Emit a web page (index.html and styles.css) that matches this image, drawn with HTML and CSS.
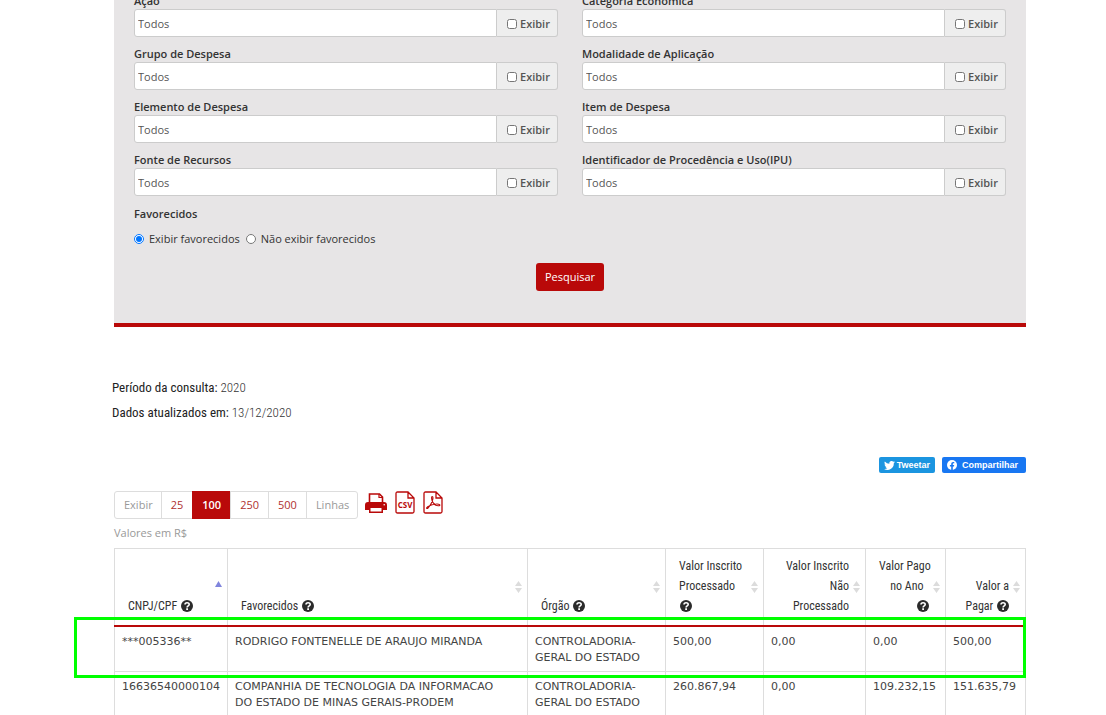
FILE: index.html
```html
<!DOCTYPE html>
<html lang="pt-BR">
<head>
<meta charset="utf-8">
<title>Consulta de Despesas</title>
<link rel="stylesheet" href="styles.css">
</head>
<body>
<svg class="sprite" aria-hidden="true">
  <symbol id="help" viewBox="0 0 12 12"><circle cx="6" cy="6" r="6" fill="#2b2b2b"/><path d="M4 4.6C4 2.2 8.2 2.2 8.2 4.5 8.2 5.9 6.1 5.8 6.1 7.4" fill="none" stroke="#fff" stroke-width="1.6"/><path d="M5.2 8.2h1.8v1.7H5.2z" fill="#fff"/></symbol>
  <symbol id="sort" viewBox="0 0 7 12"><path d="M3.500 0 7 5H0zM0 7h7l-3.500 5z" fill="#dcdcdc"/></symbol>
</svg>
<main class="page">
  <form class="panel">
    <div class="fields">
      <div class="field"><label for="f1">Ação</label><div class="group"><input type="text" id="f1" value="Todos"><label class="addon"><input type="checkbox">Exibir</label></div></div>
      <div class="field"><label for="f2">Categoria Econômica</label><div class="group"><input type="text" id="f2" value="Todos"><label class="addon"><input type="checkbox">Exibir</label></div></div>
      <div class="field"><label for="f3">Grupo de Despesa</label><div class="group"><input type="text" id="f3" value="Todos"><label class="addon"><input type="checkbox">Exibir</label></div></div>
      <div class="field"><label for="f4">Modalidade de Aplicação</label><div class="group"><input type="text" id="f4" value="Todos"><label class="addon"><input type="checkbox">Exibir</label></div></div>
      <div class="field"><label for="f5">Elemento de Despesa</label><div class="group"><input type="text" id="f5" value="Todos"><label class="addon"><input type="checkbox">Exibir</label></div></div>
      <div class="field"><label for="f6">Item de Despesa</label><div class="group"><input type="text" id="f6" value="Todos"><label class="addon"><input type="checkbox">Exibir</label></div></div>
      <div class="field"><label for="f7">Fonte de Recursos</label><div class="group"><input type="text" id="f7" value="Todos"><label class="addon"><input type="checkbox">Exibir</label></div></div>
      <div class="field"><label for="f8">Identificador de Procedência e Uso(IPU)</label><div class="group"><input type="text" id="f8" value="Todos"><label class="addon"><input type="checkbox">Exibir</label></div></div>
    </div>
    <fieldset class="choice">
      <legend>Favorecidos</legend>
      <div class="options">
        <label><input type="radio" name="fav" checked>Exibir favorecidos</label>
        <label><input type="radio" name="fav">Não exibir favorecidos</label>
      </div>
    </fieldset>
    <button type="button" class="submit">Pesquisar</button>
  </form>

  <section class="period">
    <p><strong>Período da consulta:</strong> 2020</p>
    <p><strong>Dados atualizados em:</strong> 13/12/2020</p>
  </section>

  <div class="social">
    <button type="button" class="share tweet"><svg width="11" height="9" viewBox="0 0 24 20" aria-hidden="true"><path fill="#fff" d="M24 2.400a10 10 0 0 1-2.800.8A5 5 0 0 0 23.300.5a10 10 0 0 1-3.100 1.200 4.900 4.900 0 0 0-8.400 4.500A14 14 0 0 1 1.700 1a4.900 4.900 0 0 0 1.500 6.600A5 5 0 0 1 1 7c0 2.400 1.700 4.400 3.900 4.900a5 5 0 0 1-2.200.1 4.900 4.900 0 0 0 4.600 3.400A9.900 9.900 0 0 1 0 17.500 14 14 0 0 0 21.500 5a10 10 0 0 0 2.500-2.600z"/></svg>Tweetar</button>
    <button type="button" class="share facebook"><svg width="10" height="10" viewBox="0 0 20 20" aria-hidden="true"><circle cx="10" cy="10" r="10" fill="#fff"/><path fill="#1877f2" d="M8.400 20v-7H5.800v-3h2.600V7.800c0-2.600 1.500-4 3.900-4 1.100 0 2.200.2 2.200.2v2.500h-1.300c-1.200 0-1.600.8-1.600 1.500v2h2.800l-.5 3h-2.300v7z"/></svg>Compartilhar</button>
  </div>

  <div class="toolbar">
    <div class="pager">
      <span>Exibir</span><button type="button">25</button><button type="button" class="active">100</button><button type="button">250</button><button type="button">500</button><span>Linhas</span>
    </div>
    <div class="exports">
      <button type="button" aria-label="Imprimir"><svg width="22" height="23" viewBox="0 0 22 23"><path d="M4.500 11V3h10l3 3v6" fill="#fff" stroke="#b90909" stroke-width="1.600"/><path d="M14 3v3.500h3.500" fill="none" stroke="#b90909" stroke-width="1.200"/><path d="M3 11h16a3 3 0 0 1 3 3v5h-4v3H4v-3H0v-5a3 3 0 0 1 3-3z" fill="#b90909"/><path d="M5.500 17h11v3.500h-11z" fill="#fff"/><circle cx="19.200" cy="13.800" r="0.800" fill="#fff"/></svg></button>
      <button type="button" aria-label="Exportar CSV"><svg width="20" height="23" viewBox="0 0 20 23"><path d="M1 2.500C1 1.500 1.500 1 2.500 1H13l6 6v13.500c0 1-.5 1.500-1.500 1.500h-15C1.500 22 1 21.500 1 20.500zM13 1v6h6" fill="#fff" stroke="#b90909" stroke-width="1.300"/><text class="csv" x="10" y="17" text-anchor="middle">CSV</text></svg></button>
      <button type="button" aria-label="Exportar PDF"><svg width="20" height="23" viewBox="0 0 20 23"><path d="M1 2.500C1 1.500 1.500 1 2.500 1H13l6 6v13.500c0 1-.5 1.500-1.500 1.500h-15C1.500 22 1 21.500 1 20.500zM13 1v6h6" fill="#fff" stroke="#b90909" stroke-width="1.300"/><path d="M9.200 5.500c-1 0-.7 3.500.8 6s4 3.500 6.200 3.200c1.500-.4.300-1.700-2.200-1.700-3.500 0-6.800 1-9.300 2.600-2 1.500-1 2.700.3 1.400C7.500 14.500 10 9.500 10 7c0-.9-.3-1.500-.8-1.500z" fill="none" stroke="#b90909" stroke-width="1.100"/></svg></button>
    </div>
  </div>
  <p class="note">Valores em R$</p>

  <div class="results">
    <table>
      <colgroup><col class="c-id"><col class="c-name"><col class="c-org"><col class="c-proc"><col class="c-unproc"><col class="c-amount"><col class="c-amount"></colgroup>
      <thead>
        <tr>
          <th>CNPJ/CPF <svg class="help"><use href="#help"/></svg><svg class="sort up" viewBox="0 0 7 12"><path d="M3.500 0 7 6H0z" fill="#8085dd"/></svg></th>
          <th>Favorecidos <svg class="help"><use href="#help"/></svg><svg class="sort"><use href="#sort"/></svg></th>
          <th>Órgão <svg class="help"><use href="#help"/></svg><svg class="sort"><use href="#sort"/></svg></th>
          <th>Valor Inscrito<br>Processado<br><svg class="help"><use href="#help"/></svg><svg class="sort"><use href="#sort"/></svg></th>
          <th class="num">Valor Inscrito<br>Não<br>Processado<svg class="sort"><use href="#sort"/></svg></th>
          <th class="num">Valor Pago<br>no Ano&nbsp;&nbsp;<br><svg class="help"><use href="#help"/></svg><svg class="sort"><use href="#sort"/></svg></th>
          <th class="num">Valor a<br>Pagar <svg class="help"><use href="#help"/></svg><svg class="sort"><use href="#sort"/></svg></th>
        </tr>
      </thead>
      <tbody>
        <tr><td>***005336**</td><td>RODRIGO FONTENELLE DE ARAUJO MIRANDA</td><td>CONTROLADORIA-<br>GERAL DO ESTADO</td><td>500,00</td><td>0,00</td><td>0,00</td><td>500,00</td></tr>
        <tr><td>16636540000104</td><td>COMPANHIA DE TECNOLOGIA DA INFORMACAO<br>DO ESTADO DE MINAS GERAIS-PRODEM</td><td>CONTROLADORIA-<br>GERAL DO ESTADO</td><td>260.867,94</td><td>0,00</td><td>109.232,15</td><td>151.635,79</td></tr>
      </tbody>
    </table>
    <div class="highlight"></div>
  </div>
</main>
</body>
</html>
```
FILE: styles.css
```css
* { box-sizing: border-box; }
html { overflow: hidden; }
body {
  margin: 0;
  background: #fff;
  color: #333;
  font: 11px/16px "Open Sans", "Noto Sans", sans-serif;
}
p { margin: 0; }
button, input { font: inherit; margin: 0; }
.sprite { position: absolute; width: 0; height: 0; }
.page { padding: 0 80px 0 114px; }

.panel {
  margin-top: -7px;
  padding: 0 20px 32px;
  background: #e7e5e6;
  border-bottom: 4px solid #b90909;
}
.fields {
  display: grid;
  grid-template-columns: 1fr 1fr;
  gap: 9px 24px;
}
.field > label, .choice legend {
  display: block;
  font-weight: 600;
  color: #333;
}
.group { display: flex; height: 28px; }
.group > input {
  flex: 1;
  min-width: 0;
  padding: 1px 3px 0;
  border: 1px solid #ccc;
  border-radius: 3px 0 0 3px;
  background: #fff;
  color: #555;
}
.addon {
  display: flex;
  align-items: center;
  gap: 3px;
  width: 61px;
  padding: 1px 0 0 10px;
  background: #eee;
  border: 1px solid #ccc;
  border-left: 0;
  border-radius: 0 3px 3px 0;
  font-weight: 600;
  color: #555;
}
.addon input { width: 10px; height: 10px; }
.choice { margin: 10px 0 0; padding: 0; border: 0; }
.choice legend { padding: 0; }
.options { display: flex; gap: 6px; padding-top: 9px; }
.options label { display: flex; align-items: center; gap: 5px; }
.options input { width: 10px; height: 10px; }
.submit {
  display: block;
  height: 28px;
  margin: 16px auto 0;
  padding: 0 9px;
  border: 0;
  border-radius: 3px;
  background: #b90909;
  color: #fff;
}

.period {
  margin: 48px 0 0 -2px;
  font: 300 13px/25px "Roboto Condensed", Roboto, sans-serif;
}
.period strong { font-weight: 400; color: #222; }

.social {
  display: flex;
  justify-content: flex-end;
  gap: 7px;
  margin-top: 32px;
}
.share {
  display: flex;
  align-items: center;
  height: 16px;
  padding: 0 5px;
  border: 0;
  border-radius: 2px;
  color: #fff;
  font: bold 9px/16px "Liberation Sans", sans-serif;
}
.tweet { gap: 2px; background: #1b95e0; }
.facebook { gap: 5px; padding-right: 8px; background: #1877f2; }

.toolbar { display: flex; align-items: flex-start; gap: 7px; margin-top: 18px; }
.pager {
  display: flex;
  height: 28px;
  border: 1px solid #ddd;
  border-radius: 3px;
  line-height: 26px;
  color: #999;
}
.pager > * { padding: 0 8px 0 9px; }
.pager > * + * { border: 0; border-left: 1px solid #ddd; }
.pager button { padding: 0 9px; background: #fff; color: #b03030; }
.pager button.active { margin: -1px 0; background: #b90909; border-color: #b90909; color: #fff; font-weight: 600; }
.exports { display: flex; gap: 8px; }
.exports button { display: block; padding: 0; border: 0; background: none; }
.exports svg { display: block; }
.csv { font: bold 8px "Open Sans", sans-serif; fill: #b90909; }
.note { margin-top: 6px; color: #999; }

.results { position: relative; margin-top: 7px; }
table { width: 100%; table-layout: fixed; border-collapse: collapse; }
.c-id { width: 113px; }
.c-org { width: 138px; }
.c-proc { width: 98px; }
.c-unproc { width: 102px; }
.c-amount { width: 80px; }
th, td { border: 1px solid #ddd; text-align: left; }
th {
  position: relative;
  height: 77px;
  padding: 7px 16px 9px 13px;
  vertical-align: bottom;
  border-bottom: 2px solid #b90909;
  font: 12px/20px "Roboto Condensed", Roboto, sans-serif;
  white-space: nowrap;
}
th.num { text-align: right; }
.help { width: 12px; height: 12px; margin-left: 1px; vertical-align: -2px; }
.sort { position: absolute; right: 5px; bottom: 32px; width: 7px; height: 12px; }
td {
  height: 45px;
  padding: 7px 7px 5px;
  vertical-align: top;
  font: 11px/16px "DejaVu Sans", sans-serif;
  color: #444;
  white-space: nowrap;
}
.highlight {
  position: absolute;
  inset: 69px 0 auto -40px;
  height: 61px;
  border: 3px solid #0f0;
  pointer-events: none;
}
```
